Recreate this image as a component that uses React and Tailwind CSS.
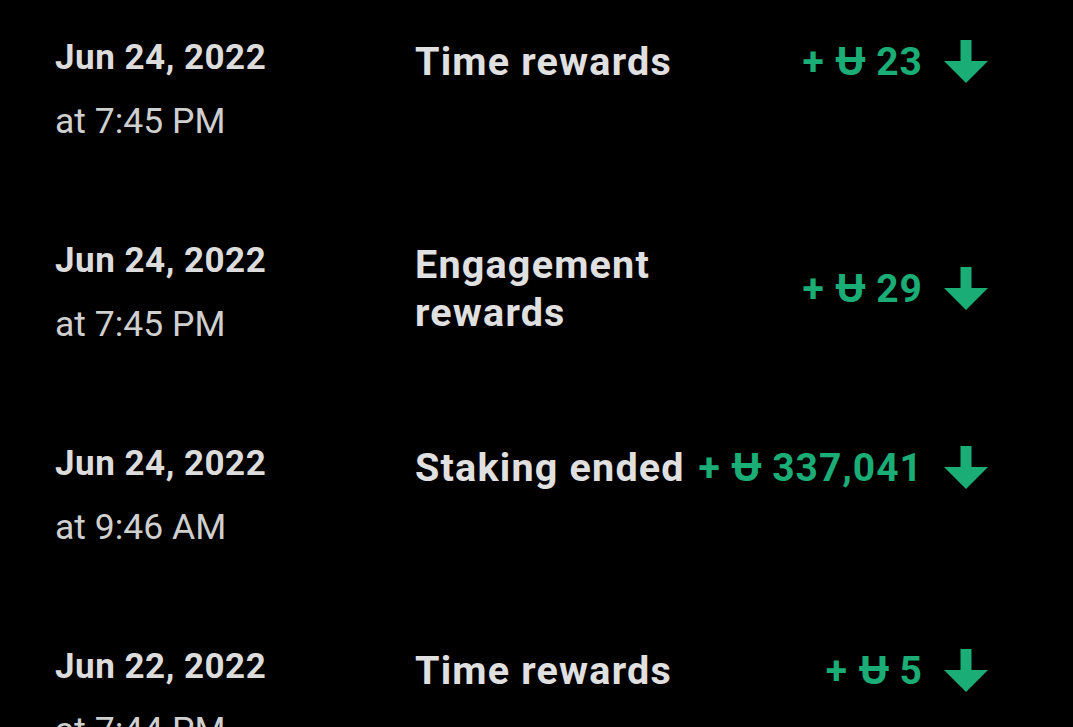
import React from "react";

const rows = [
  { date: "Jun 24, 2022", time: "at 7:45 PM", title: "Time rewards", amount: "23" },
  { date: "Jun 24, 2022", time: "at 7:45 PM", title: "Engagement rewards", amount: "29" },
  { date: "Jun 24, 2022", time: "at 9:46 AM", title: "Staking ended", amount: "337,041" },
  { date: "Jun 22, 2022", time: "at 7:44 PM", title: "Time rewards", amount: "5" },
];

function Arrow() {
  return (
    <svg width="44" height="44" viewBox="0 0 44 44" className="shrink-0">
      <rect x="16.5" y="0" width="11" height="22" fill="#1aad75" />
      <polygon points="0,21 44,21 22,43" fill="#1aad75" />
    </svg>
  );
}

export default function App() {
  return (
    <div
      className="w-[1073px] h-[727px] overflow-hidden bg-black pt-[36px]"
      style={{ fontFamily: "Roboto, 'Noto Sans', sans-serif" }}
    >
      {rows.map((r, i) => (
        <div key={i} className="flex items-start h-[203px] pl-[55px] pr-[85px]">
          <div className="w-[360px] shrink-0">
            <div className="text-[35px] leading-[44px] font-bold tracking-[0.5px] text-[#dcdcdc]">{r.date}</div>
            <div className="text-[35.5px] leading-[44px] mt-[19px] text-[#cfcfcf]">{r.time}</div>
          </div>
          <div className="flex-1 min-w-0 flex items-center mt-[2px]">
            <div className="flex-1 min-w-0 text-[39.5px] leading-[48px] font-bold tracking-[1.2px] text-[#e0e0e0]">
              {r.title}
            </div>
            <div className="shrink-0 ml-[10px] flex items-center">
              <span className="text-[39px] font-bold tracking-[1px] text-[#1aad75] leading-[48px] whitespace-nowrap flex items-center">
                <span>+</span>
                <span className="ml-[11px]">Ʉ</span>
                <span className="ml-[10px]">{r.amount}</span>
              </span>
              <span className="ml-[21px] flex items-center">
                <Arrow />
              </span>
            </div>
          </div>
        </div>
      ))}
    </div>
  );
}
